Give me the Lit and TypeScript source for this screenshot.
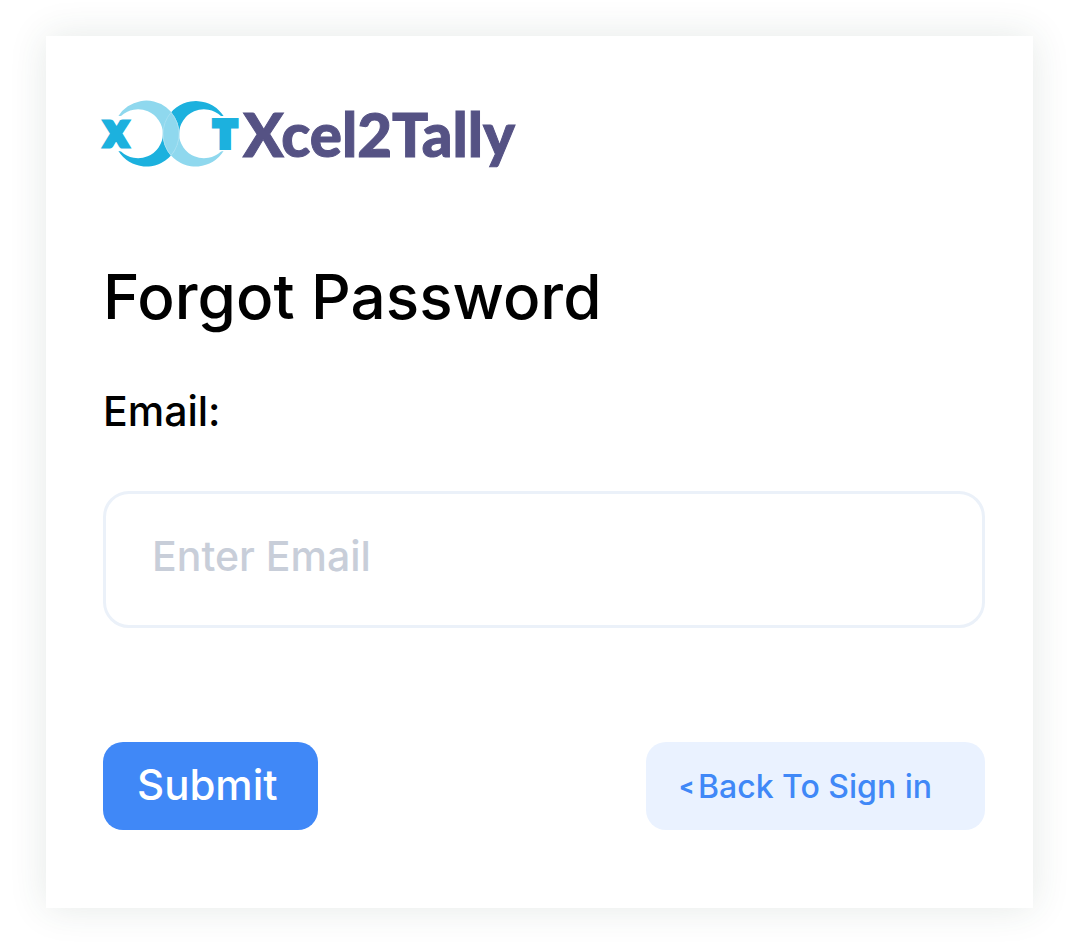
import { LitElement, html, css } from "lit";
import { customElement } from "lit/decorators.js";

@customElement("app-logo")
class AppLogo extends LitElement {
  static styles = css`
    :host {
      display: flex;
      align-items: center;
      gap: 4px;
      height: 72px;
    }
    .mark {
      display: block;
      flex: none;
      width: 136px;
      height: 68px;
      overflow: visible;
    }
    .dark {
      fill: #1cb1de;
    }
    .light {
      fill: #8fd8ee;
    }
    .seam {
      fill: none;
      stroke: #a6e0f2;
      stroke-width: 1;
    }
    .letter {
      font: 900 36px "Lato", sans-serif;
      fill: #1cb1de;
      stroke: #1cb1de;
      stroke-width: 6;
    }
    .letter.small {
      font-size: 32px;
      stroke-width: 5;
    }
    .name {
      font: 900 60px/68px "Lato", sans-serif;
      color: #555284;
      -webkit-text-stroke: 1px #555284;
    }
  `;

  render() {
    return html`
      <svg class="mark" viewBox="0 0 136 68" aria-hidden="true">
        <path class="dark" d="M15.4 51 A33 33 0 0 0 68 55.5 A33 33 0 0 1 60 34 A25 25 0 0 1 18 51.5 Z" />
        <path class="dark" d="M120.6 16 A33 33 0 0 0 68 12.5 A33 33 0 0 1 76 34 A25 25 0 0 1 118 16 Z" />
        <path class="light" d="M15.4 16 A33 33 0 1 1 68 55.5 A33 33 0 0 1 60 34 A25 25 0 0 0 18 16 Z" />
        <path class="light" d="M120.6 51 A33 33 0 0 1 68 55.5 A33 33 0 0 0 76 34 A25 25 0 0 0 118 51.5 Z" />
        <path class="seam" d="M68 12.5 A33 33 0 0 1 68 55.5 A33 33 0 0 1 68 12.5" />
        <text class="letter small" x="13" y="46" text-anchor="middle">X</text>
        <text class="letter" x="122" y="47" text-anchor="middle">T</text>
      </svg>
      <span class="name">Xcel2Tally</span>
    `;
  }
}

@customElement("app-root")
class AppRoot extends LitElement {
  static styles = css`
    :host {
      display: block;
      box-sizing: border-box;
      min-height: 100vh;
      padding: 36px 46px;
      background: #fff;
      font-family: "Inter", sans-serif;
      font-weight: 500;
      color: #000;
    }
    .card {
      box-sizing: border-box;
      padding: 62px 48px 78px 57px;
      background: #fff;
      box-shadow: 0 0 36px rgba(40, 70, 60, 0.12);
    }
    .title {
      margin: 87px 0 0;
      font-size: 62px;
      line-height: 80px;
      font-weight: 500;
    }
    .form {
      display: flex;
      flex-direction: column;
    }
    .label {
      margin-top: 46px;
      font-size: 41px;
      line-height: 56px;
    }
    .input {
      box-sizing: border-box;
      width: 100%;
      height: 137px;
      margin-top: 52px;
      padding: 0 46px 8px;
      border: 3px solid #ebf1f9;
      border-radius: 26px;
      outline: none;
      background: #fff;
      font: inherit;
      font-size: 41px;
      color: #000;
    }
    .input::placeholder {
      color: #c8ced9;
      opacity: 1;
    }
    .actions {
      display: flex;
      justify-content: space-between;
      align-items: stretch;
      margin-top: 114px;
    }
    .button,
    .back {
      box-sizing: border-box;
      height: 88px;
      border-radius: 20px;
    }
    .button {
      padding: 0 40px 4px 34px;
      border: 0;
      background: #4088f7;
      color: #fff;
      font: inherit;
      font-size: 42px;
    }
    .back {
      display: flex;
      align-items: center;
      gap: 4px;
      padding: 0 53px 0 33px;
      background: #eaf2ff;
      color: #4088f7;
      font-size: 32px;
      text-decoration: none;
    }
    .chevron {
      font-size: 22px;
      font-weight: 800;
    }
  `;

  render() {
    return html`
      <main class="card">
        <app-logo></app-logo>
        <h1 class="title">Forgot Password</h1>
        <form class="form" @submit=${(e: Event) => e.preventDefault()}>
          <label class="label" for="email">Email:</label>
          <input class="input" id="email" type="email" placeholder="Enter Email" />
          <div class="actions">
            <button class="button" type="submit">Submit</button>
            <a class="back" href="#"><span class="chevron">&lt;</span> Back To Sign in</a>
          </div>
        </form>
      </main>
    `;
  }
}
